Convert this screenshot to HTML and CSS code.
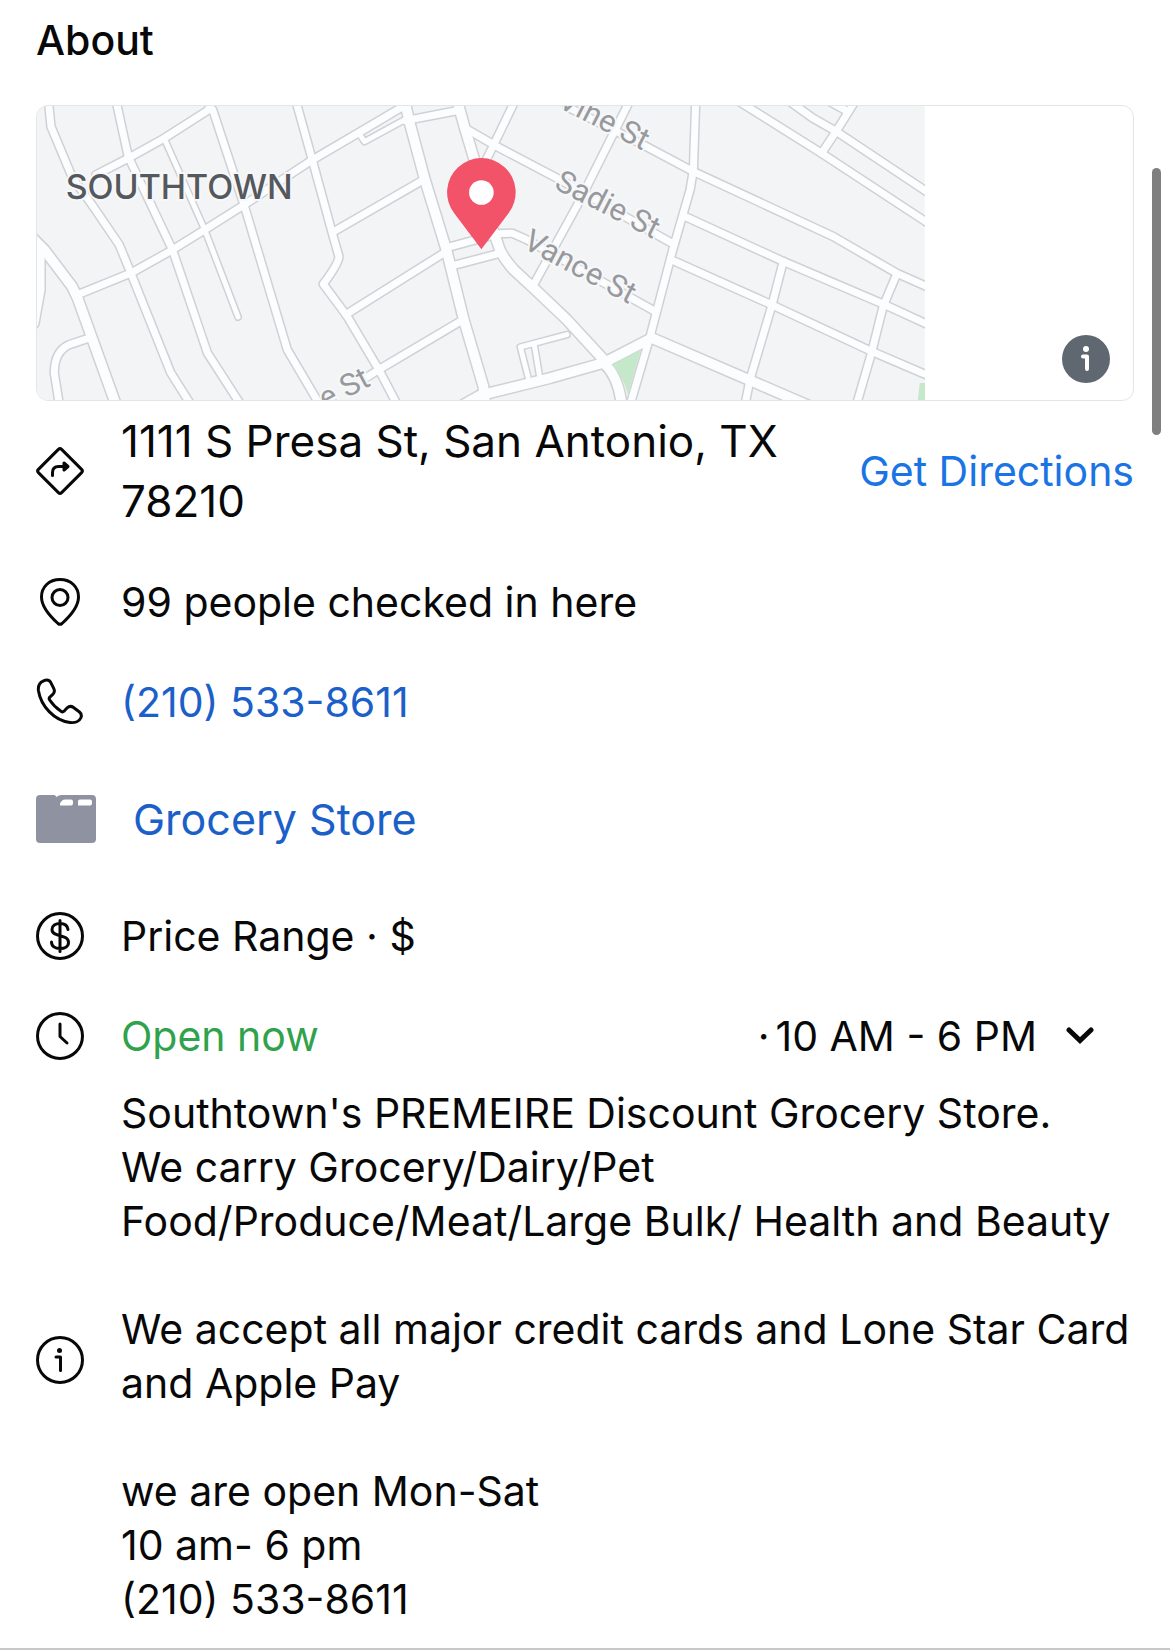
FILE: index.html
```html
<!DOCTYPE html>
<html lang="en">
<head>
  <meta charset="utf-8">
  <meta name="viewport" content="width=device-width, initial-scale=1.0">
  <title>About</title>
  <link rel="stylesheet" href="styles.css">
</head>
<body>

  <main class="about">
    <h1>About</h1>

    <div class="map-card">
      <svg class="map" viewBox="108 48 2667 882" role="img" aria-label="Map of Southtown">
        <defs>
          <!-- streets, drawn twice: grey casing, then white on top -->
          <g id="streets">
            <path d="M142 30L150 110 215 265 270 340 355 465 390 550 510 850 570 945"/>
            <path d="M345 30L382 200 515 480 620 790 720 945"/>
            <path d="M636 60L730 345 860 780 960 950"/>
            <path d="M285 255L382 205 490 145 620 62 640 30"/>
            <path d="M230 615L390 550 515 480 612 420 730 345 935 210 1080 125 1215 45"/>
            <path d="M885 30L935 210 995 430 1015 500Q1015 520 968 583L1040 680 1135 840 1190 945"/>
            <path d="M1000 425L1260 275"/>
            <path d="M1035 675L1330 490"/>
            <path d="M1100 862L1135 840 1380 695"/>
            <path d="M265 745L205 765Q160 785 160 850L175 945"/>
            <path d="M1215 92L1380 60"/>
            <path d="M1395 115L1490 170 1680 270 2015 460"/>
            <path d="M1545 30L1480 165 1450 225"/>
            <path d="M1890 30L1740 330 1600 585"/>
            <path d="M1490 432L1535 430 1580 450 1965 665"/>
            <path d="M1345 472L1480 435"/>
            <path d="M1360 527L1500 490"/>
            <path d="M2087 30L2080 240 2070 300 2018 480 1950 740 1890 945"/>
            <path d="M1700 50L1920 160 2080 245 2500 440 2690 550 2785 592"/>
            <path d="M2055 380L2350 515 2655 645 2785 705"/>
            <path d="M2025 515L2315 645 2615 785 2785 858"/>
            <path d="M2350 515L2315 650 2250 870 2235 945"/>
            <path d="M2690 555L2650 650 2615 790 2570 945"/>
            <path d="M2210 30L2465 190 2785 400"/>
            <path d="M2370 35L2440 85 2510 125 2785 308"/>
            <path d="M2565 35L2505 130 2465 190"/>
            <path d="M2490 35L2545 65"/>
          </g>
          <g id="lanes">
            <path d="M490 145L612 420 712 682"/>
            <path d="M1075 130L1092 155 1215 88"/>
            <path d="M1700 735L1560 772 1583 862"/>
            <path d="M1602 765L1617 855"/>
          </g>
          <g id="avenues">
            <path d="M100 450L130 480 213 590 230 625 345 945"/>
            <path d="M116 480L116 600 98 700"/>
            <path d="M1212 30L1228 100 1272 265 1338 480 1390 690 1449 890 1455 945"/>
            <path d="M1370 30L1392 110 1425 220Q1460 380 1492 460 1500 495 1540 540L1600 595 1700 690 1810 810"/>
            <path d="M1390 945L1440 917 1650 865 1810 820 1955 745 2245 870 2430 950"/>
            <path d="M1810 820Q1855 860 1864 945"/>
          </g>
        </defs>

        <rect class="land" x="108" y="45" width="2667" height="888"/>
        <g class="casing">
          <use href="#lanes" class="casing-lane"/>
          <use href="#streets" class="casing-street"/>
          <use href="#avenues" class="casing-avenue"/>
        </g>
        <g class="road">
          <use href="#lanes" class="road-lane"/>
          <use href="#streets" class="road-street"/>
          <use href="#avenues" class="road-avenue"/>
        </g>
        <path class="park" d="M1835 825L1922 780 1883 915Q1870 860 1835 825z"/>
        <path class="park" d="M2760 880h20v55h-26z"/>

        <text class="area-label" x="194" y="328">SOUTHTOWN</text>
        <text class="street-label" transform="translate(1928 182) rotate(27)" text-anchor="end">Vine St</text>
        <text class="street-label" transform="translate(1658 294) rotate(27)">Sadie St</text>
        <text class="street-label" transform="translate(1564 472) rotate(28)">Vance St</text>
        <text class="street-label" transform="translate(1114 886) rotate(-28)" text-anchor="end">e St</text>

        <path class="pin" d="M1443 478L1362 371A103 103 0 1 1 1524 371z"/>
        <circle cx="1443" cy="308" r="37" fill="#fff"/>
      </svg>

      <button class="map-info" type="button" aria-label="Map information">
        <svg viewBox="0 0 48 48" width="48" height="48">
          <circle cx="24" cy="24" r="24" fill="#5f6770"/>
          <circle cx="24" cy="14" r="3" fill="#fff"/>
          <path d="M21 21.5h4V34" fill="none" stroke="#fff" stroke-width="4" stroke-linecap="round" stroke-linejoin="round"/>
        </svg>
      </button>
    </div>

    <ul class="details">
      <li class="row address">
        <svg class="icon" viewBox="0 0 48 48">
          <path d="M22.4 2.4a2.3 2.3 0 0 1 3.2 0l20 20a2.3 2.3 0 0 1 0 3.2l-20 20a2.3 2.3 0 0 1-3.2 0l-20-20a2.3 2.3 0 0 1 0-3.2z"/>
          <path d="M16.5 28.5v-3q0-6 6-6h8"/>
          <path d="M28 16l4 3.5-4 3.5z" class="solid"/>
        </svg>
        <span class="text">1111 S Presa St, San Antonio, TX 78210</span>
        <a class="directions" href="#directions">Get Directions</a>
      </li>

      <li class="row">
        <svg class="icon" viewBox="0 0 48 48">
          <path d="M24 1.5c-11 0-18.500 7.500-18.500 17.500 0 9 6 17 16.500 26.500q2 1.600 4 0C36.500 36 42.500 28 42.500 19 42.500 9 35 1.500 24 1.500z"/>
          <circle cx="24" cy="19.5" r="8"/>
        </svg>
        <span class="text">99 people checked in here</span>
      </li>

      <li class="row">
        <svg class="icon" viewBox="0 0 48 48">
          <path d="M7.500 2.800C3.500 4.500 1.800 8 2.500 13 5 28 18 42.500 34 44.500c5 .6 9.500-1.200 11-5 .8-2.300.3-4-1.500-5.500l-6-4.500c-2-1.500-4.500-1.300-6.300.3L28 33.200c-1 .9-2 .8-3 .1-4.500-3-8.500-7-11.300-11.300-.8-1.200-.6-2.300.4-3.200l2.700-2.500c1.700-1.600 2-3.800.9-6L14.700 4.300C13.200 1.700 10.500 1.500 7.500 2.800z"/>
        </svg>
        <a class="text" href="tel:+12105338611">(210) 533-8611</a>
      </li>

      <li class="row category">
        <svg class="folder" viewBox="0 0 60 48">
          <path fill="#8f92a1" fill-rule="evenodd" d="M4 0h14q1.500 0 2.500 2 2-2 5-2H56q4 0 4 4v40q0 4-4 4H4q-4 0-4-4V4q0-4 4-4zM24 10.500h11q2 0 2-2V6.500q0-2-2-2h-6q-3 0-5 4zM42 6v4.500h12q2 0 2-2v-2q0-2-2-2H44q-2 0-2 1.500z"/>
        </svg>
        <a class="text" href="#grocery">Grocery Store</a>
      </li>

      <li class="row">
        <svg class="icon" viewBox="0 0 48 48">
          <circle cx="24" cy="24" r="22.5"/>
          <path d="M24 8.500v31M32 17.500c-.5-4-3.500-6-8-6s-8 2.200-8 6c0 8.500 16.500 4 16.500 13 0 3.800-3.500 6-8.500 6s-8.500-2.200-8.500-6.500"/>
        </svg>
        <span class="text">Price Range · $</span>
      </li>

      <li class="row">
        <svg class="icon" viewBox="0 0 48 48">
          <circle cx="24" cy="24" r="22.5"/>
          <path d="M24 12v12.500l7 6.500"/>
        </svg>
        <span class="text open">Open now</span>
        <button class="hours" type="button">
          <span class="time"><span>·</span><span>10 AM - 6 PM</span></span>
          <svg viewBox="0 0 28 18" width="28" height="18">
            <path d="M3 3l11 10.500L25 3" fill="none" stroke="#080809" stroke-width="5" stroke-linecap="round"/>
          </svg>
        </button>
      </li>

      <li class="row description">
        <svg class="icon" viewBox="0 0 48 48">
          <circle cx="24" cy="24" r="22.5"/>
          <path d="M20 21h4.500v13.500"/>
          <circle cx="23.5" cy="14.5" r="2.5" class="solid dot"/>
        </svg>
        <div class="text">
          <p>Southtown's PREMEIRE Discount Grocery Store.<br>
          We carry Grocery/Dairy/Pet Food/Produce/Meat/Large Bulk/ Health and Beauty</p>
          <p>We accept all major credit cards and Lone Star Card and Apple Pay</p>
          <p>we are open Mon-Sat<br>
          10 am- 6 pm<br>
          (210) 533-8611</p>
        </div>
      </li>
    </ul>

    <div class="scroll-thumb"></div>
  </main>

</body>
</html>
```

FILE: styles.css
```css
* {
  box-sizing: border-box;
}

body {
  margin: 0;
  background: #fff;
  color: #080809;
  font-family: Inter, "Liberation Sans", sans-serif;
  font-size: 41px;
  line-height: 54px;
}

.about {
  position: relative;
  padding: 0 36px 14px;
  border-bottom: 2px solid #c8c8cc;
}

h1 {
  margin: 0;
  padding: 13px 0 38px;
  font-size: 41px;
  font-weight: 500;
  line-height: 54px;
}

a {
  color: #1a60c8;
  text-decoration: none;
}

button {
  padding: 0;
  border: 0;
  background: none;
  color: inherit;
  font: inherit;
  cursor: pointer;
}

/* map */
.map-card {
  position: relative;
  overflow: hidden;
  border: 1px solid #e4e5e7;
  border-radius: 12px;
}

.map {
  display: block;
  width: 81%;
}

.map-info {
  position: absolute;
  right: 23px;
  bottom: 17px;
  height: 48px;
}

.land {
  fill: #f3f4f6;
}

.casing,
.road {
  fill: none;
  stroke-linejoin: round;
  stroke-linecap: round;
}

.casing {
  stroke: #d0d1d4;
}

.road {
  stroke: #fcfdfe;
}

.casing-lane { stroke-width: 24; }
.casing-street { stroke-width: 30; }
.casing-avenue { stroke-width: 38; }
.road-lane { stroke-width: 15; }
.road-street { stroke-width: 21; }
.road-avenue { stroke-width: 29; }

.park {
  fill: #c5e8cb;
}

.area-label,
.street-label {
  stroke: #f6f7f9;
  stroke-width: 12px;
  paint-order: stroke;
}

.area-label {
  fill: #55585c;
  font-size: 102px;
  font-weight: 500;
}

.street-label {
  fill: #98999c;
  font-family: Roboto, sans-serif;
  font-size: 93px;
}

.pin {
  fill: #f35369;
}

/* detail rows */
.details {
  margin: 0;
  padding: 0;
  list-style: none;
}

.row {
  display: flex;
  align-items: center;
  gap: 37px;
  min-height: 100px;
}

.row .text {
  flex: 1;
}

.icon {
  flex: none;
  width: 48px;
  height: 48px;
  fill: none;
  stroke: #080809;
  stroke-width: 3;
  stroke-linecap: round;
  stroke-linejoin: round;
}

.icon .solid {
  fill: #080809;
}

.icon .dot {
  stroke: none;
}

.address {
  padding: 10px 0 21px;
  font-size: 44px;
  line-height: 60px;
}

.address .directions {
  flex: none;
  color: #1b74e4;
  font-size: 41px;
}

.category {
  min-height: 134px;
  font-size: 43px;
}

.folder {
  flex: none;
  width: 60px;
  height: 48px;
}

.open {
  color: #31a24c;
}

.hours {
  display: flex;
  align-items: center;
  gap: 29px;
  padding-right: 40px;
}

.time {
  display: flex;
  gap: 6px;
}

/* the text box reaches a little below its last line */
.description .text {
  padding-bottom: 8px;
}

.description p {
  margin: 0 0 54px;
}

.description p:last-child {
  margin-bottom: 0;
}

/* floating scroll indicator */
.scroll-thumb {
  position: absolute;
  top: 168px;
  right: 9px;
  width: 9px;
  height: 267px;
  border-radius: 5px;
  background: #7f7f7f;
}
```
